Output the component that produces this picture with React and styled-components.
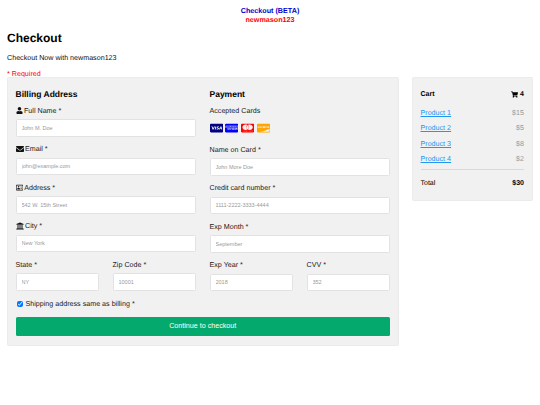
import React from 'react';
import styled, { createGlobalStyle } from 'styled-components';
import {
  FaUser,
  FaEnvelope,
  FaRegAddressCard,
  FaUniversity,
  FaShoppingCart,
  FaCcVisa,
  FaCcAmex,
  FaCcMastercard,
  FaCcDiscover,
} from 'react-icons/fa';

const GlobalStyle = createGlobalStyle`
  html, body {
    margin: 0;
    padding: 0;
    background: #fff;
    font-family: "Liberation Sans", Arial, sans-serif;
    color: #000;
    text-rendering: geometricPrecision;
  }
  * { box-sizing: border-box; }
`;

const Banner = styled.header`
  padding-top: 7px;
  text-align: center;
  font-size: 7.2px;
  font-weight: bold;
  line-height: 8.5px;
`;

const BannerLine = styled.div`
  color: ${(props) => props.$color};
`;

const Page = styled.main`
  padding: 0 7px;
`;

const Title = styled.h2`
  margin: 6px 0 0;
  font-size: 12px;
  line-height: 16px;
  font-weight: bold;
`;

const Intro = styled.p`
  margin: 7px 0 0;
  font-size: 7.15px;
  line-height: 10px;
  color: #111;
`;

const Required = styled.p`
  margin: 6px 0 0;
  font-size: 7.15px;
  line-height: 10px;
  color: #f00;
`;

const Row = styled.div`
  display: flex;
  align-items: flex-start;
  gap: 13px;
  margin-top: -2px;
`;

const Panel = styled.section`
  background: #f1f1f1;
  border: 1px solid #ebebeb;
  border-radius: 1.5px;
`;

const FormPanel = styled(Panel)`
  width: 391.5px;
  height: 269px;
  padding: 9.5px 7.5px 0;
`;

const Columns = styled.div`
  display: grid;
  grid-template-columns: 180px 180px;
  gap: 14px;
`;

const SectionTitle = styled.h3`
  margin: 0 0 6px;
  font-size: 8.5px;
  line-height: 12px;
  font-weight: bold;
`;

const Field = styled.div`
  margin-bottom: 7.5px;
`;

const Label = styled.label`
  display: flex;
  align-items: center;
  gap: 1.5px;
  height: 10px;
  margin-bottom: 3.5px;
  font-size: 7.15px;
  color: #222;
  svg {
    height: ${(props) => props.$iconHeight || 8}px;
    width: auto;
    color: #111;
  }
`;

const Input = styled.input`
  display: block;
  width: 100%;
  height: 17.5px;
  padding: 0 5px;
  background: #fff;
  border: 1px solid #e2e2e2;
  border-radius: 1.5px;
  font-family: inherit;
  font-size: 5.5px;
  &::placeholder {
    color: #999;
    opacity: 1;
  }
`;

const Split = styled.div`
  display: grid;
  grid-template-columns: 83px 83px;
  gap: 14px;
`;

const Cards = styled.div`
  display: flex;
  gap: 2.4px;
  height: 10px;
  margin-top: 7.5px;
  margin-bottom: 11.5px;
`;

const Card = styled.span`
  display: flex;
  align-items: center;
  color: ${(props) => props.$color};
  svg {
    width: 13.3px;
    height: 10px;
  }
`;

const ShippingRow = styled.label`
  display: flex;
  align-items: center;
  gap: 2.5px;
  height: 10px;
  margin: 0 0 8px 1.5px;
  font-size: 7.15px;
  color: #222;
`;

const Check = styled.input`
  width: 6px;
  height: 6px;
  margin: 0;
`;

const SubmitButton = styled.button`
  display: block;
  width: 100%;
  height: 19px;
  background: #04aa6d;
  border: none;
  border-radius: 1.5px;
  color: #fff;
  font-family: inherit;
  font-size: 7.15px;
`;

const CartPanel = styled(Panel)`
  width: 121.5px;
  height: 124px;
  padding: 11px 8px 0;
`;

const CartHead = styled.div`
  display: flex;
  justify-content: space-between;
  align-items: center;
  height: 10px;
  margin-bottom: 9px;
  font-size: 7px;
  font-weight: bold;
`;

const CartCount = styled.span`
  display: flex;
  align-items: center;
  gap: 2px;
`;

const CartRow = styled.div`
  display: flex;
  justify-content: space-between;
  align-items: center;
  height: 10px;
  margin-bottom: 5.4px;
  font-size: 7.15px;
`;

const ProductLink = styled.a`
  color: #2196f3;
  text-decoration: underline;
`;

const Price = styled.span`
  color: #999;
`;

const Divider = styled.hr`
  margin: -0.5px 0 8.5px;
  border: none;
  border-top: 1px solid #d9d9d9;
`;

const TotalRow = styled(CartRow)`
  font-size: 7px;
`;

const products = [
  { name: 'Product 1', price: '$15' },
  { name: 'Product 2', price: '$5' },
  { name: 'Product 3', price: '$8' },
  { name: 'Product 4', price: '$2' },
];

const App = () => {
  return (
    <>
      <GlobalStyle />
      <Banner>
        <BannerLine $color="#0000c8">Checkout (BETA)</BannerLine>
        <BannerLine $color="#f00">newmason123</BannerLine>
      </Banner>
      <Page>
        <Title>Checkout</Title>
        <Intro>Checkout Now with newmason123</Intro>
        <Required>* Required</Required>
        <Row>
          <FormPanel>
            <Columns>
              <div>
                <SectionTitle>Billing Address</SectionTitle>
                <Field>
                  <Label $iconHeight={7}><FaUser /> Full Name *</Label>
                  <Input placeholder="John M. Doe" />
                </Field>
                <Field>
                  <Label><FaEnvelope /> Email *</Label>
                  <Input placeholder="john@example.com" />
                </Field>
                <Field>
                  <Label $iconHeight={7.2}><FaRegAddressCard /> Address *</Label>
                  <Input placeholder="542 W. 15th Street" />
                </Field>
                <Field>
                  <Label><FaUniversity /> City *</Label>
                  <Input placeholder="New York" />
                </Field>
                <Split>
                  <Field>
                    <Label>State *</Label>
                    <Input placeholder="NY" />
                  </Field>
                  <Field>
                    <Label>Zip Code *</Label>
                    <Input placeholder="10001" />
                  </Field>
                </Split>
              </div>
              <div>
                <SectionTitle>Payment</SectionTitle>
                <Label>Accepted Cards</Label>
                <Cards>
                  <Card $color="navy"><FaCcVisa preserveAspectRatio="none" /></Card>
                  <Card $color="blue"><FaCcAmex preserveAspectRatio="none" /></Card>
                  <Card $color="red"><FaCcMastercard preserveAspectRatio="none" /></Card>
                  <Card $color="orange"><FaCcDiscover preserveAspectRatio="none" /></Card>
                </Cards>
                <Field>
                  <Label>Name on Card *</Label>
                  <Input placeholder="John More Doe" />
                </Field>
                <Field>
                  <Label>Credit card number *</Label>
                  <Input placeholder="1111-2222-3333-4444" />
                </Field>
                <Field>
                  <Label>Exp Month *</Label>
                  <Input placeholder="September" />
                </Field>
                <Split>
                  <Field>
                    <Label>Exp Year *</Label>
                    <Input placeholder="2018" />
                  </Field>
                  <Field>
                    <Label>CVV *</Label>
                    <Input placeholder="352" />
                  </Field>
                </Split>
              </div>
            </Columns>
            <ShippingRow>
              <Check type="checkbox" defaultChecked />
              Shipping address same as billing *
            </ShippingRow>
            <SubmitButton>Continue to checkout</SubmitButton>
          </FormPanel>
          <CartPanel>
            <CartHead>
              <span>Cart</span>
              <CartCount><FaShoppingCart /> 4</CartCount>
            </CartHead>
            {products.map((product) => (
              <CartRow key={product.name}>
                <ProductLink href="#">{product.name}</ProductLink>
                <Price>{product.price}</Price>
              </CartRow>
            ))}
            <Divider />
            <TotalRow>
              <span>Total</span>
              <b>$30</b>
            </TotalRow>
          </CartPanel>
        </Row>
      </Page>
    </>
  );
};

export default App;
